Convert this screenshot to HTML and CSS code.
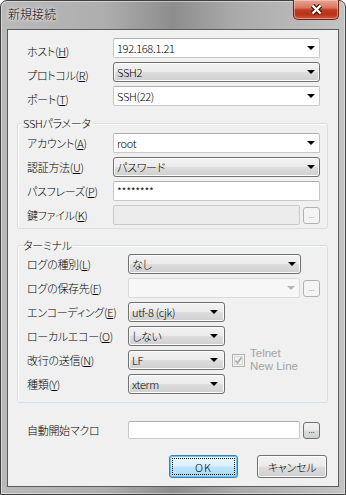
FILE: index.html
```html
<!DOCTYPE html>
<html lang="ja">
<head>
  <meta charset="UTF-8" />
  <meta name="viewport" content="width=device-width, initial-scale=1.0" />
  <title>新規接続</title>
  <link rel="stylesheet" href="styles.css">
</head>
<body>

  <div class="window">
    <div class="titlebar">
      <span class="title">新規接続</span>
      <span class="close-btn">
        <svg width="13" height="11" viewBox="0 0 13 11">
          <path d="M2.5 1.5 L10.5 9.5 M10.5 1.5 L2.5 9.5" stroke="#3b1610" stroke-width="4.6" />
          <path d="M2.5 1.5 L10.5 9.5 M10.5 1.5 L2.5 9.5" stroke="#ffffff" stroke-width="2.4" />
        </svg>
      </span>
    </div>

    <div class="client">
      <div class="top">
        <div class="row top-row">
          <label>ホスト(<u>H</u>)</label>
          <div class="combo edit wide"><span>192.168.1.21</span><i class="arrow"></i></div>
        </div>
        <div class="row top-row">
          <label>プロトコル(<u>R</u>)</label>
          <div class="combo list wide"><span>SSH2</span><i class="arrow"></i></div>
        </div>
        <div class="row top-row">
          <label>ポート(<u>T</u>)</label>
          <div class="combo edit wide"><span>SSH(22)</span><i class="arrow"></i></div>
        </div>
      </div>

      <fieldset class="group ssh">
        <legend>SSHパラメータ</legend>
        <div class="row">
          <label>アカウント(<u>A</u>)</label>
          <div class="combo edit wide"><span>root</span><i class="arrow"></i></div>
        </div>
        <div class="row">
          <label>認証方法(<u>U</u>)</label>
          <div class="combo list wide"><span>パスワード</span><i class="arrow"></i></div>
        </div>
        <div class="row">
          <label>パスフレーズ(<u>P</u>)</label>
          <div class="field wide"><span>********</span></div>
        </div>
        <div class="row">
          <label>鍵ファイル(<u>K</u>)</label>
          <div class="field disabled key"></div>
          <span class="dots-btn disabled">...</span>
        </div>
      </fieldset>

      <fieldset class="group terminal">
        <legend>ターミナル</legend>
        <div class="row">
          <label>ログの種別(<u>L</u>)</label>
          <div class="combo list long"><span>なし</span><i class="arrow"></i></div>
        </div>
        <div class="row">
          <label>ログの保存先(<u>F</u>)</label>
          <div class="combo edit disabled path"><span></span><i class="arrow"></i></div>
          <span class="dots-btn disabled">...</span>
        </div>
        <div class="row">
          <label>エンコーディング(<u>E</u>)</label>
          <div class="combo list short"><span>utf-8 (cjk)</span><i class="arrow"></i></div>
        </div>
        <div class="row">
          <label>ローカルエコー(<u>O</u>)</label>
          <div class="combo list short"><span>しない</span><i class="arrow"></i></div>
        </div>
        <div class="row">
          <label>改行の送信(<u>N</u>)</label>
          <div class="combo list short"><span>LF</span><i class="arrow"></i></div>
          <span class="check">
            <svg width="13" height="13" viewBox="0 0 13 13">
              <rect x="0.5" y="0.5" width="12" height="12" fill="#f4f4f4" stroke="#b1b1b1" />
              <rect x="2.5" y="2.5" width="8" height="8" fill="#f0f0f0" stroke="#d8d8d8" />
              <path d="M3.5 6.5 L5.5 9 L9.5 3.5" fill="none" stroke="#a8a8a8" stroke-width="1.6" />
            </svg>
          </span>
          <span class="check-text">Telnet<br>New Line</span>
        </div>
        <div class="row">
          <label>種類(<u>Y</u>)</label>
          <div class="combo list short"><span>xterm</span><i class="arrow"></i></div>
        </div>
      </fieldset>

      <div class="row macro">
        <label>自動開始マクロ</label>
        <div class="field macro-field"></div>
        <span class="dots-btn">...</span>
      </div>

      <div class="buttons">
        <span class="btn default"><span class="focus">OK</span></span>
        <span class="btn">キャンセル</span>
      </div>
    </div>
  </div>

</body>
</html>
```

FILE: styles.css
```css
body {
  margin: 0;
  background: #ffffff;
  font-family: "Noto Sans CJK JP", "Liberation Sans", sans-serif;
  font-size: 11px;
  font-weight: 300;
  letter-spacing: -0.3px;
  color: #000000;
}

.window {
  width: 346px;
  height: 495px;
  box-sizing: border-box;
  padding: 0 6px 7px 6px;
  border: 1px solid #3f3f3f;
  border-radius: 7px 7px 0 0;
  background: linear-gradient(to right, #b9b9b9 0%, #aeaeae 30%, #8d8d8d 50%, #aaaaaa 68%, #c3c3c3 100%);
  box-shadow: inset 0 0 0 1px rgba(255, 255, 255, 0.45);
  display: flex;
  flex-direction: column;
}

.titlebar {
  height: 28px;
  display: flex;
  justify-content: space-between;
  align-items: flex-start;
  flex: none;
}

.title {
  margin-top: 6px;
  padding-left: 1px;
  line-height: 14px;
  font-size: 12px;
  letter-spacing: 0;
  text-shadow: 0 0 6px #ffffff, 0 0 3px #ffffff;
}

.close-btn {
  margin-top: -1px;
  width: 46px;
  height: 20px;
  box-sizing: border-box;
  border: 1px solid #6b2519;
  border-top: none;
  border-radius: 0 0 5px 5px;
  background: linear-gradient(#e7a796 0%, #d8775f 40%, #c13d22 52%, #b93218 75%, #d3583a 100%);
  box-shadow: inset 0 0 0 1px rgba(255, 210, 200, 0.5);
  display: flex;
  align-items: center;
  justify-content: center;
}

.client {
  flex: 1;
  border: 1px solid #5b5b5b;
  background: #f0f0f0;
  padding: 8px 10px 0 9px;
}

.top {
  padding: 0 8px 0 10px;
}

.row {
  display: flex;
  align-items: center;
  height: 20px;
}

.row + .row {
  margin-top: 4px;
}

.row label {
  width: 86px;
  flex: none;
  line-height: 14px;
  white-space: nowrap;
  font-feature-settings: "palt";
}

.top-row label {
  margin-top: 6px;
}

.terminal .row label,
.macro label {
  width: 101px;
}

u {
  text-decoration: underline;
  text-underline-offset: 1px;
}

/* combo boxes */
.combo,
.field {
  height: 20px;
  box-sizing: border-box;
  display: flex;
  align-items: center;
  padding-left: 3px;
  flex: none;
  line-height: 14px;
  white-space: nowrap;
}

.combo.edit,
.field {
  background: #ffffff;
  border: 1px solid #c4c7cc;
  border-top-color: #abadb3;
  border-radius: 2px;
}

.combo.list {
  border: 1px solid #707070;
  border-radius: 3px;
  background: linear-gradient(#f3f3f3 0%, #ebebeb 48%, #dddddd 52%, #cfcfcf 100%);
  box-shadow: inset 0 0 0 1px #fbfbfb;
  font-feature-settings: "palt";
}

.combo .arrow {
  margin-left: auto;
  margin-right: 4px;
  width: 0;
  height: 0;
  border-left: 4px solid transparent;
  border-right: 4px solid transparent;
  border-top: 4px solid #000000;
}

.combo.short .arrow {
  margin-right: 6px;
}

.wide {
  width: 207px;
}

.long {
  width: 173px;
}

.short {
  width: 97px;
}

.key {
  width: 187px;
}

.path,
.macro-field {
  width: 172px;
}

.field.disabled {
  background: #ececec;
  border-color: #c9c9c9;
}

.combo.disabled {
  background: #f7f7f7;
  border-color: #d9d9d9;
}

.combo.disabled .arrow {
  border-top-color: #b4b4b4;
}

.dots-btn {
  margin-left: 3px;
  width: 17px;
  height: 17px;
  box-sizing: border-box;
  border: 1px solid #707070;
  border-radius: 3px;
  background: linear-gradient(#f2f2f2 0%, #ebebeb 48%, #dddddd 52%, #cfcfcf 100%);
  font-family: "Liberation Sans", sans-serif;
  font-size: 8px;
  line-height: 8px;
  letter-spacing: 0;
  color: #000000;
  display: flex;
  justify-content: center;
  align-items: flex-end;
  padding-bottom: 3px;
  flex: none;
}

.dots-btn.disabled {
  border-color: #adb2b5;
  background: #f4f4f4;
  color: #8d8d8d;
}

.macro {
  margin-top: 18px;
  height: 18px;
  padding: 0 8px 0 10px;
}

.macro .field {
  height: 18px;
}

.macro .dots-btn {
  margin-top: 1px;
}

/* group boxes */
.group {
  margin: 0;
  border: 1px solid #d5dfe5;
  border-radius: 3px;
  box-shadow: inset 1px 1px 0 #ffffff;
  min-width: 0;
}

.group legend {
  margin-left: -5px;
  padding: 0 1px;
  line-height: 14px;
  font-feature-settings: "palt";
}

.ssh {
  margin-top: 10px;
  padding: 3px 7px 3px 9px;
}

.terminal {
  margin-top: 9px;
  padding: 2px 7px 8px 9px;
}

.check {
  margin-left: 7px;
  height: 13px;
  display: flex;
}

.check-text {
  margin-left: 5px;
  font-family: "Liberation Sans", sans-serif;
  font-size: 11.5px;
  font-weight: 400;
  letter-spacing: 0;
  line-height: 13px;
  color: #a3a3a3;
}

/* buttons */
.buttons {
  margin-top: 16px;
  padding-right: 1px;
  display: flex;
  justify-content: flex-end;
  gap: 19px;
}

.btn {
  width: 70px;
  height: 23px;
  box-sizing: border-box;
  border: 1px solid #707070;
  border-radius: 3px;
  background: linear-gradient(#f2f2f2 0%, #ebebeb 48%, #dddddd 52%, #cfcfcf 100%);
  box-shadow: inset 0 0 0 1px #fcfcfc;
  display: flex;
  align-items: center;
  justify-content: center;
  font-feature-settings: "palt";
}

.btn.default {
  width: 69px;
  padding: 2px;
  border-color: #3c7fb1;
  background: linear-gradient(#eaf6fd 0%, #d9f0fc 48%, #bee6fd 52%, #a7d9f5 100%);
  box-shadow: inset 0 0 0 1px #6bc6f5;
}

.btn .focus {
  width: 100%;
  height: 100%;
  box-sizing: border-box;
  border: 1px dotted #000000;
  display: flex;
  align-items: center;
  justify-content: center;
  letter-spacing: 1px;
}
```
